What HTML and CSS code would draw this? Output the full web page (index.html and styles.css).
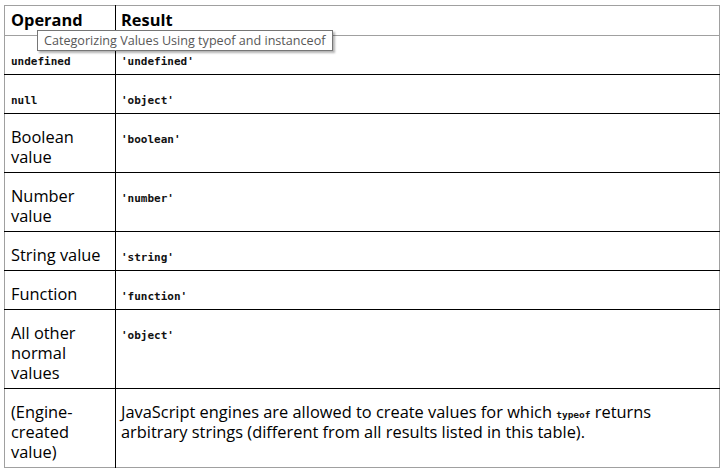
FILE: index.html
```html
<!DOCTYPE html>
<html>
<head>
<meta charset="utf-8">
<link rel="stylesheet" href="styles.css">
</head>
<body>
<div class="wrap">
<table class="types">
  <colgroup><col class="c-op"><col class="c-res"></colgroup>
  <thead>
    <tr><th>Operand</th><th>Result</th></tr>
  </thead>
  <tbody>
    <tr><td><code>undefined</code></td><td><code>'undefined'</code></td></tr>
    <tr><td><code>null</code></td><td><code>'object'</code></td></tr>
    <tr><td>Boolean value</td><td><code>'boolean'</code></td></tr>
    <tr><td>Number value</td><td><code>'number'</code></td></tr>
    <tr><td>String value</td><td><code>'string'</code></td></tr>
    <tr><td>Function</td><td><code>'function'</code></td></tr>
    <tr><td>All other normal values</td><td><code>'object'</code></td></tr>
    <tr><td>(Engine-created value)</td><td>JavaScript engines are allowed to create values for which <code class="small">typeof</code> returns arbitrary strings (different from all results listed in this table).</td></tr>
  </tbody>
</table>
<div class="tooltip">Categorizing Values Using typeof and instanceof</div>
</div>
</body>
</html>
```

FILE: styles.css
```css
html, body {
  margin: 0;
  padding: 0;
  background: #fff;
}
.wrap {
  position: relative;
  padding: 5px 0 0 4px;
}
.types {
  border-collapse: collapse;
  width: 716px;
  table-layout: fixed;
  border: 1px solid #a0a0a0;
  font-family: "Open Sans", "Noto Sans", sans-serif;
  font-size: 16.4px;
  color: #000;
}
.c-op { width: 111px; }
.types th {
  text-align: left;
  font-weight: 700;
  line-height: 20px;
  padding: 4px 5px 5px 6px;
  border-bottom: 1px solid #a0a0a0;
  vertical-align: baseline;
}
.types td {
  line-height: 20px;
  padding: 13px 5px 5px 6px;
  border-top: 1px solid #000;
  vertical-align: baseline;
}
.types tbody tr:first-child td { border-top: none; }
.types th:first-child,
.types td:first-child { border-right: 1px solid #000; }
.types td:last-child, .types th:last-child { padding-left: 5px; }
code {
  font-family: "DejaVu Sans Mono", "Liberation Mono", monospace;
  font-size: 11px;
  line-height: 1;
  font-weight: 600;
  color: #111;
}
code.small { font-size: 9.5px; }
.tooltip {
  position: absolute;
  left: 37px;
  top: 30px;
  width: 288px;
  height: 19px;
  padding: 0 0 0 6px;
  border: 1px solid #767676;
  background: #fff;
  box-shadow: 2px 2px 2px rgba(0,0,0,0.3);
  font-family: "Open Sans", "Noto Sans", sans-serif;
  font-size: 12.6px;
  line-height: 19px;
  color: #575757;
  white-space: nowrap;
}
```
